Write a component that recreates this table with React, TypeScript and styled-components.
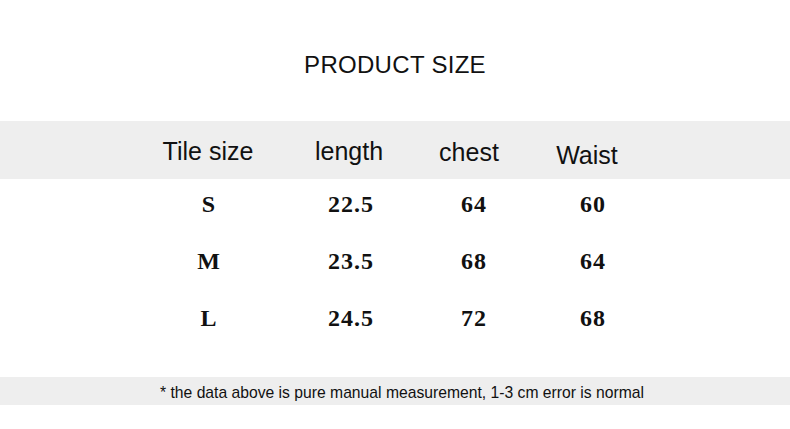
import styled, { createGlobalStyle } from "styled-components";

const GlobalStyle = createGlobalStyle`
  html, body {
    margin: 0;
    padding: 0;
    background: #ffffff;
  }
`;

const Page = styled.div`
  width: 790px;
  height: 429px;
  background: #ffffff;
  color: #111111;
  font-family: "Liberation Sans", Arial, sans-serif;
  display: flex;
  flex-direction: column;
`;

const Title = styled.h1`
  margin: 53px 0 0;
  font-size: 24px;
  font-weight: 400;
  line-height: 24px;
  text-align: center;
  letter-spacing: 0.3px;
`;

const HeaderBand = styled.div`
  margin-top: 44px;
  height: 58px;
  background: #eeeeee;
`;

const Columns = styled.div`
  display: grid;
  grid-template-columns: 140px 144px 98px 140px;
  padding-left: 138px;
  height: 100%;
  align-items: center;
`;

const HeadCell = styled.div<{ $dx?: number; $dy?: number }>`
  font-size: 25px;
  line-height: 1;
  text-align: center;
  color: #111111;
  transform: translate(${(p) => p.$dx ?? 0}px, ${(p) => p.$dy ?? 0}px);
`;

const Body = styled.div`
  display: flex;
  flex-direction: column;
  gap: 7px;
`;

const Row = styled(Columns)`
  height: 50px;
`;

const Cell = styled.div<{ $dx?: number }>`
  font-family: "Liberation Serif", "Times New Roman", serif;
  font-weight: 700;
  font-size: 24px;
  line-height: 48px;
  letter-spacing: 1px;
  text-align: center;
  color: #111111;
  transform: translateX(${(p) => p.$dx ?? 0}px);
`;

const Note = styled.div`
  margin-top: 34px;
  height: 28px;
  box-sizing: border-box;
  padding: 3px 0 0 160px;
  background: #eeeeee;
  display: flex;
  align-items: center;
  font-size: 15.7px;
  color: #111111;
`;

const heads = [
  { label: "Tile size", dx: 0, dy: 1 },
  { label: "length", dx: -1, dy: 1 },
  { label: "chest", dx: -2, dy: 2 },
  { label: "Waist", dx: -3, dy: 5 },
];

const rows = [
  ["S", "22.5", "64", "60"],
  ["M", "23.5", "68", "64"],
  ["L", "24.5", "72", "68"],
];

const shifts = [1, 1, 3, 3];

export default function App() {
  return (
    <Page>
      <GlobalStyle />
      <Title>PRODUCT SIZE</Title>
      <HeaderBand>
        <Columns>
          {heads.map((h) => (
            <HeadCell key={h.label} $dx={h.dx} $dy={h.dy}>
              {h.label}
            </HeadCell>
          ))}
        </Columns>
      </HeaderBand>
      <Body>
        {rows.map((r) => (
          <Row key={r[0]}>
            {r.map((v, i) => (
              <Cell key={i} $dx={shifts[i]}>
                {v}
              </Cell>
            ))}
          </Row>
        ))}
      </Body>
      <Note>* the data above is pure manual measurement, 1-3 cm error is normal</Note>
    </Page>
  );
}
